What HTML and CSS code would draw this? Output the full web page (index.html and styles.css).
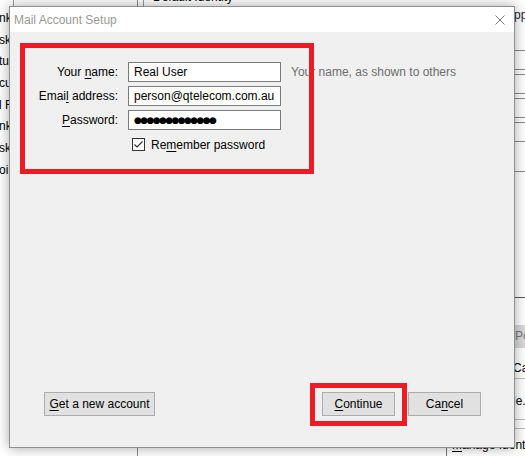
FILE: index.html
```html
<!DOCTYPE html>
<html lang="en">
<head>
  <meta charset="UTF-8">
  <meta name="viewport" content="width=device-width, initial-scale=1.0">
  <title>Mail Account Setup</title>
  <link rel="stylesheet" href="styles.css">
</head>
<body>

  <!-- Janela de fundo (configurações da conta) -->
  <div class="app">
    <div class="folders">
      <div class="folders-top"></div>
      <ul class="folder-list">
        <li>nk</li>
        <li>sk</li>
        <li>tu</li>
        <li>cu</li>
        <li>l F</li>
        <li>nk</li>
        <li>sk</li>
        <li>oi</li>
      </ul>
    </div>
    <div class="settings">
      <div class="settings-top"><span>Default Identity</span></div>
      <div class="settings-body">
        <div class="settings-label">pp</div>
        <div class="field"></div>
        <div class="field"></div>
        <div class="field"></div>
        <div class="field"></div>
        <div class="field-area"></div>
        <div class="table-head">Pos</div>
        <div class="table-row">Ca</div>
        <div class="table-row tall">le.</div>
        <div class="table-foot"></div>
        <div class="manage"><u>M</u>anage Identities...</div>
      </div>
    </div>
  </div>

  <!-- Diálogo -->
  <div class="dialog">
    <div class="titlebar">
      <span class="title">Mail Account Setup</span>
      <svg class="close" width="10" height="10" viewBox="0 0 10 10">
        <path d="M0.5 0.5 L9.5 9.5 M9.5 0.5 L0.5 9.5" stroke="#777" stroke-width="1" fill="none"/>
      </svg>
    </div>

    <div class="dialog-body">
      <div class="account-form">
        <label>Your <u>n</u>ame:</label>
        <div class="textbox">Real User</div>
        <span class="hint">Your name, as shown to others</span>

        <label>Emai<u>l</u> address:</label>
        <div class="textbox">person@qtelecom.com.au</div>
        <span></span>

        <label><u>P</u>assword:</label>
        <div class="textbox"><span class="dots">●●●●●●●●●●●●●</span></div>
        <span></span>

        <div class="check-row">
          <svg class="checkbox" width="13" height="13" viewBox="0 0 13 13">
            <rect x="0.5" y="0.5" width="12" height="12" fill="#fff" stroke="#333"/>
            <path d="M2.5 6.5 L5 9 L10.5 3.5" stroke="#333" stroke-width="1.2" fill="none"/>
          </svg>
          <span>Re<u>m</u>ember password</span>
        </div>
      </div>

      <div class="actions">
        <button class="btn btn-new"><u>G</u>et a new account</button>
        <button class="btn"><u>C</u>ontinue</button>
        <button class="btn">Ca<u>n</u>cel</button>
      </div>

      <!-- marcações em vermelho -->
      <div class="mark mark-form"></div>
      <div class="mark mark-continue"></div>
    </div>
  </div>

</body>
</html>
```

FILE: styles.css
```css
* {
  box-sizing: border-box;
}

body {
  margin: 0;
  width: 525px;
  height: 456px;
  overflow: hidden;
  position: relative;
  background: #fff;
  font-family: "Liberation Sans", Arial, sans-serif;
  font-size: 12px;
  color: #000;
}

u {
  text-decoration: underline;
  text-underline-offset: 2px;
}

/* fundo */
.app {
  display: flex;
  height: 456px;
}

.folders {
  width: 138px;
  flex-shrink: 0;
  border-right: 1px solid #8a8a8a;
}

.folders-top {
  height: 6px;
  margin-left: 13px;
  border-left: 1px solid #999;
}

.folder-list {
  list-style: none;
  margin: 0;
  padding: 2px 0 0;
}

.folder-list li {
  height: 21.7px;
  line-height: 21.7px;
  margin-left: -1px;
  white-space: nowrap;
}

.settings {
  flex: 1;
  min-width: 0;
  overflow: hidden;
  padding-left: 5px;
}

.settings-top {
  height: 6px;
  overflow: hidden;
  border-left: 1px solid #999;
  padding-left: 9px;
}

.settings-top span {
  display: block;
  margin-top: -10px;
  line-height: 14px;
}

.settings-body {
  padding-left: 300px;
  margin-right: -30px;
}

.settings-label {
  height: 44px;
  padding: 3px 0 0 71px;
  line-height: 12px;
  color: #223;
}

.field {
  height: 20px;
  border: 1px solid #8a8a8a;
  margin-bottom: 4px;
}

.field-area {
  margin-top: 29px;
  height: 127px;
  border-top: 1px solid #8a8a8a;
  border-bottom: 1px solid #555;
}

.table-head {
  margin-top: 27px;
  height: 23px;
  line-height: 23px;
  background: #d9d9d9;
  color: #777;
  padding-left: 72px;
  white-space: nowrap;
}

.table-row {
  height: 31px;
  line-height: 40px;
  padding-left: 70px;
  border-bottom: 1px solid #bbb;
}

.table-row.tall {
  height: 41px;
  line-height: 44px;
}

.table-foot {
  height: 9px;
  border-bottom: 1px solid #bbb;
}

.manage {
  margin-top: 2px;
  margin-left: 3px;
  padding-left: 5px;
  height: 30px;
  line-height: 28px;
  border-left: 1px solid #777;
  white-space: nowrap;
}

/* diálogo */
.dialog {
  position: absolute;
  left: 9px;
  top: 6px;
  width: 506px;
  height: 442px;
  border: 1px solid #8f8f8f;
  box-shadow: 0 0 12px rgba(0, 0, 0, 0.35);
  display: flex;
  flex-direction: column;
}

.titlebar {
  height: 25px;
  background: #fff;
  display: flex;
  align-items: center;
  justify-content: space-between;
  padding: 0 9px 0 4px;
}

.title {
  color: #999;
}

.dialog-body {
  flex: 1;
  position: relative;
  background: #f0f0f0;
  display: flex;
  flex-direction: column;
  padding: 30px 0 31px;
}

.account-form {
  display: grid;
  grid-template-columns: 108px 153px auto;
  grid-auto-rows: 20px;
  gap: 4px 10px;
  align-items: center;
}

.account-form label {
  text-align: right;
  white-space: nowrap;
}

.textbox {
  height: 20px;
  border: 1px solid #7a7a7a;
  background: #fff;
  padding: 0 5px;
  line-height: 18px;
  white-space: nowrap;
  overflow: hidden;
}

.dots {
  font-family: "DejaVu Sans", sans-serif;
  font-size: 9px;
  letter-spacing: -1.6px;
  vertical-align: top;
  line-height: 18px;
}

.hint {
  color: #6d6d6d;
  white-space: nowrap;
}

.check-row {
  grid-column: 2 / 4;
  display: flex;
  align-items: center;
  gap: 6px;
  padding-left: 4px;
  margin-top: 1px;
}

.checkbox {
  display: block;
}

.actions {
  margin-top: auto;
  display: flex;
  gap: 13px;
  padding: 0 33px 0 34px;
}

.btn {
  height: 24px;
  width: 73px;
  padding: 0;
  border: 1px solid #adadad;
  background: #e1e1e1;
  font-family: inherit;
  font-size: 12px;
  color: #000;
}

.btn-new {
  width: 111px;
  margin-right: auto;
}

.mark {
  position: absolute;
  border: 5px solid #ed1c24;
}

.mark-form {
  left: 10px;
  top: 11px;
  width: 294px;
  height: 131px;
}

.mark-continue {
  left: 300px;
  top: 351px;
  width: 97px;
  height: 43px;
}
```
